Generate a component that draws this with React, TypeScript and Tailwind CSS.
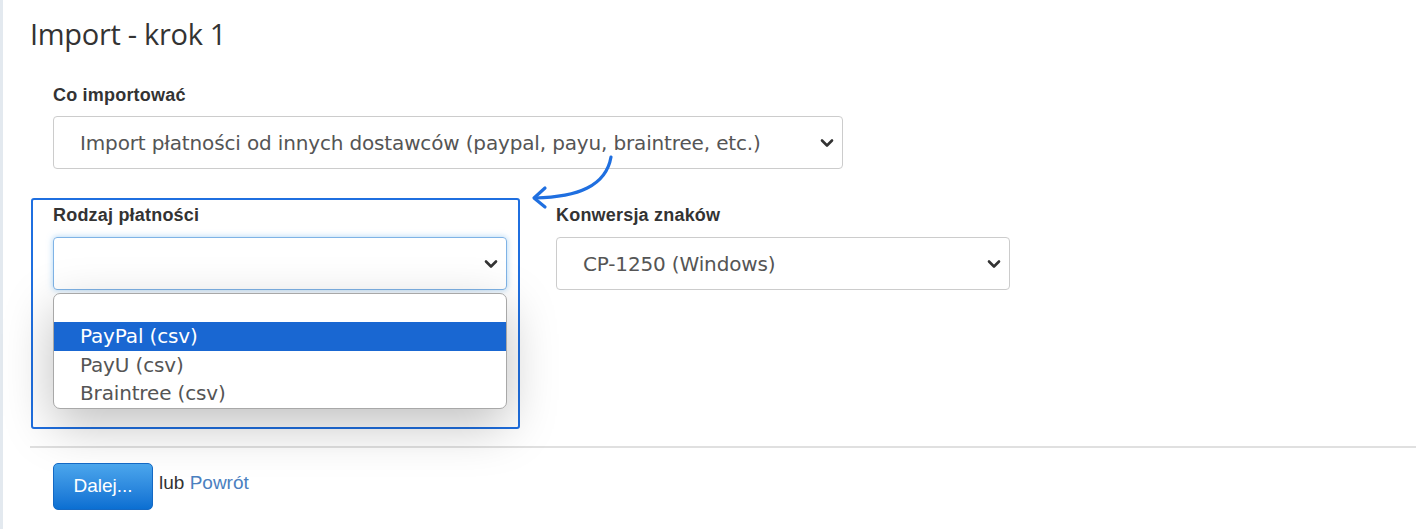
import React from "react";

const Chevron = () => (
  <svg width="14" height="10" viewBox="0 0 14 10" className="shrink-0">
    <polyline points="2,2.5 7,7.5 12,2.5" fill="none" stroke="#333" strokeWidth="2.6" strokeLinecap="round" strokeLinejoin="round" />
  </svg>
);

export default function App() {
  return (
    <div className="relative min-h-[529px] bg-white border-l-[3px] border-[#e3e9ef] font-['Liberation_Sans',Arial,sans-serif] text-[#333]">
      <div className="pl-[27px] pt-[15px]">
        <h1 className="text-[29px] leading-[38px] text-[#333] font-['Open_Sans',sans-serif] tracking-[-0.3px]">Import - krok 1</h1>
      </div>

      <div className="pl-[50px] pt-[32px]">
        <div className="text-[18px] font-bold leading-[20px] tracking-[0.2px]">Co importować</div>
        <div className="mt-[11px] w-[790px] h-[53px] border border-[#ccc] rounded-[4px] flex items-center justify-between pl-[26px] pr-[8px] text-[20px] text-[#555] font-['DejaVu_Sans',sans-serif] tracking-[-0.15px]">
          <span>Import płatności od innych dostawców (paypal, payu, braintree, etc.)</span>
          <Chevron />
        </div>
      </div>

      <div className="flex pl-[28px] pt-[29px] gap-[36px]">
        <div className="w-[489px] h-[231px] border-2 border-[#1f6fe0] rounded-[3px] pl-[20px] pr-[11px] pt-[5px]">
          <div className="text-[18px] font-bold leading-[20px] tracking-[0.2px]">Rodzaj płatności</div>
          <div className="mt-[12px] h-[53px] border border-[#7fb3e6] rounded-[4px] shadow-[0_0_6px_rgba(102,175,233,0.55)] flex items-center justify-end pr-[8px]">
            <Chevron />
          </div>
          <div className="mt-[3px] border border-[#a8a8a8] rounded-[7px] overflow-hidden bg-white shadow-[0_16px_50px_rgba(0,0,0,0.25)] text-[20px] leading-[28.5px] text-[#555] font-['DejaVu_Sans',sans-serif] tracking-[-0.15px]">
            <div className="h-[28px]"></div>
            <div className="bg-[#1967d2] text-white pl-[26px]">PayPal (csv)</div>
            <div className="pl-[26px]">PayU (csv)</div>
            <div className="pl-[26px]">Braintree (csv)</div>
          </div>
        </div>
        <div className="w-[454px] pt-[7px]">
          <div className="text-[18px] font-bold leading-[20px] tracking-[0.2px]">Konwersja znaków</div>
          <div className="mt-[12px] h-[53px] border border-[#ccc] rounded-[4px] flex items-center justify-between pl-[26px] pr-[8px] text-[20px] text-[#555] font-['DejaVu_Sans',sans-serif] tracking-[-0.15px]">
            <span>CP-1250 (Windows)</span>
            <Chevron />
          </div>
        </div>
      </div>

      <div className="ml-[27px] mt-[17px] h-[2px] bg-[#e0e0e0]"></div>

      <div className="pl-[50px] pt-[15px] flex items-center gap-[6px]">
        <button className="w-[100px] h-[47px] rounded-[5px] border border-[#1469c4] bg-gradient-to-b from-[#4ba6ec] to-[#0a6fd2] text-white text-[19px] font-['Liberation_Sans',Arial,sans-serif]">Dalej...</button>
        <span className="text-[19px] mt-[-6px]">lub <span className="text-[#4a80c0]">Powrót</span></span>
      </div>

      <svg className="absolute left-0 top-0 pointer-events-none" width="1416" height="529">
        <path d="M608 157 C 603 186, 575 197, 532 198" fill="none" stroke="#1f6fe0" strokeWidth="3.2" strokeLinecap="round" />
        <path d="M542 188 L 531 198 L 542 207" fill="none" stroke="#1f6fe0" strokeWidth="3.2" strokeLinecap="round" strokeLinejoin="round" />
      </svg>
    </div>
  );
}
